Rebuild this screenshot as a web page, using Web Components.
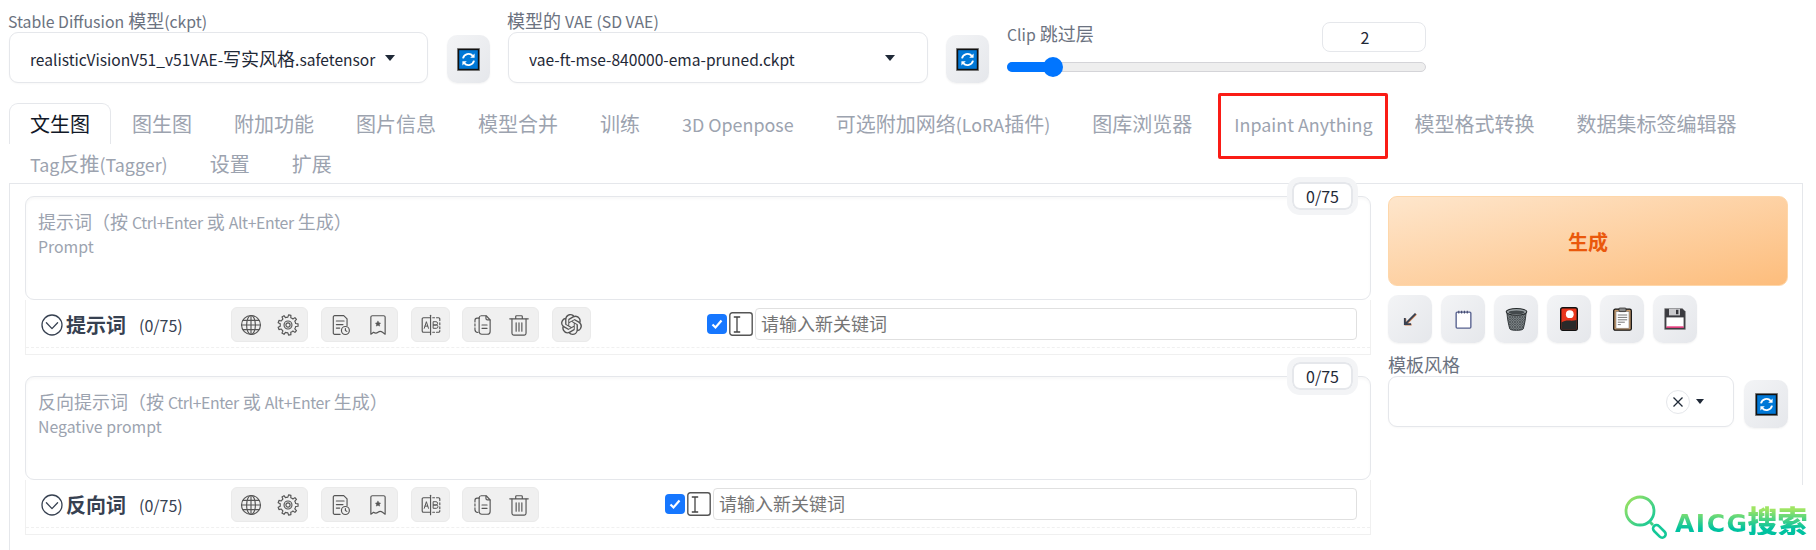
<!DOCTYPE html>
<html lang="zh">
<head>
<meta charset="utf-8">
<title>txt2img</title>
<style>
	html, body { margin: 0; background: #fff; }
	body { font-family: "Noto Sans CJK SC", "Noto Sans", sans-serif; color: #374151; }
</style>
</head>
<body>
<sd-app></sd-app>
<script>
const FONT = `"Noto Sans CJK SC", "Noto Sans", sans-serif`;
const LATIN = `.l { font-size: .88em; }`;
const lat = (text) => text.replace(/[\x21-\x7e]+(?: [\x21-\x7e]+)*/g, (m) => `<span class="l">${m}</span>`);

function gearPath(cx, cy, outer, inner, teeth) {
	let d = '';
	const step = (Math.PI * 2) / teeth;
	for (let i = 0; i < teeth; i++) {
		const a = i * step;
		const pts = [
			[inner, a - step * 0.5],
			[inner, a - step * 0.27],
			[outer, a - step * 0.17],
			[outer, a + step * 0.17],
			[inner, a + step * 0.27],
		];
		pts.forEach((p, j) => {
			const x = (cx + p[0] * Math.cos(p[1])).toFixed(2);
			const y = (cy + p[0] * Math.sin(p[1])).toFixed(2);
			d += (i === 0 && j === 0 ? 'M' : 'L') + x + ' ' + y;
		});
	}
	return d + 'Z';
}

const line = (inner) => `<svg viewBox="0 0 20 20" width="22" height="22" fill="none" stroke="#555" stroke-width="1.05" stroke-linecap="round" stroke-linejoin="round">${inner}</svg>`;

const ICONS = {
	globe: line(`<circle cx="10" cy="10" r="8.6"/><ellipse cx="10" cy="10" rx="4" ry="8.6"/><path d="M10 1.4v17.2M1.400 10h17.200M2.600 5.800h14.800M2.600 14.200h14.800"/>`),
	gear: line(`<path d="${gearPath(10, 10, 9.2, 7.1, 9)}"/><circle cx="10" cy="10" r="3.600"/><circle cx="10" cy="10" r="1.900"/>`),
	history: line(`<path d="M12.500 1.500H4.200A1.200 1.200 0 0 0 3 2.700v14.600a1.200 1.200 0 0 0 1.200 1.200h5M12.500 1.500l3 3v6"/><path d="M5.800 6.400h7M5.800 9.600h6M5.800 12.800h3"/><circle cx="14" cy="15" r="3.600"/><path d="M14 13.200V15l1.300.8"/>`),
	bookmark: line(`<path d="M3.500 3a1.400 1.400 0 0 1 1.400-1.400h10.200A1.400 1.400 0 0 1 16.500 3v15.400l-2.400-1.800a3.400 3.400 0 0 0-4.100 0 3.400 3.400 0 0 1-4 0L3.500 18.400z"/><path d="M10 6.600l.8 1.400 1.500.3-1 1.100.2 1.600-1.500-.7-1.500.7.200-1.600-1-1.100 1.500-.3z" fill="#555" stroke-width=".5"/>`),
	ab: line(`<path d="M9.600 1.200v17.600"/><path d="M9.600 3.400H3.200A1.200 1.200 0 0 0 2 4.600v10.800a1.200 1.200 0 0 0 1.200 1.200h6.400"/><path d="M11.600 3.400h1.600M15 3.400h1.800a1.200 1.200 0 0 1 1.200 1.200v1.400M18 8v1.800M18 11.600v1.800M18 15v.4a1.200 1.200 0 0 1-1.200 1.200H15M13.200 16.600h-1.600"/><path d="M3.900 13l1.900-6 1.900 6M4.600 11h2.400" stroke-width=".9"/><path d="M12.300 7h2.200a1.400 1.400 0 0 1 0 3h-2.200zM12.300 10h2.500a1.500 1.500 0 0 1 0 3h-2.500z" stroke-width=".9"/>`),
	copy: line(`<path d="M7.400 3.400A2 2 0 0 1 9.400 1.600h4.400l3.600 3.700v10.500a2.600 2.600 0 0 1-2.600 2.600H9.800a2.600 2.600 0 0 1-2.400-1.800"/><path d="M13.600 1.800v2.200a1.400 1.400 0 0 0 1.400 1.400h2.200"/><path d="M7.400 3.600v12.600"/><path d="M7.400 3.800H5.600A2 2 0 0 0 3.600 5.800v1.400M3.600 9v1.800M3.600 12.600v1.600a2.600 2.600 0 0 0 2.600 2.600"/><path d="M10 10h4.600M10 13h4.600"/>`),
	trash: line(`<path d="M1.600 4.400h16.800M7 4.200V2.400a.8.8 0 0 1 .8-.8h4.400a.8.8 0 0 1 .8.8v1.800"/><path d="M3.600 4.600v13a1.600 1.600 0 0 0 1.600 1.600h9.600a1.600 1.600 0 0 0 1.600-1.600v-13"/><path d="M7.400 8v7.600M10 8v7.600M12.600 8v7.600"/>`),
	openai: `<svg viewBox="0 0 24 24" width="21" height="21" fill="#555"><path d="M22.2819 9.8211a5.9847 5.9847 0 0 0-.5157-4.9108 6.0462 6.0462 0 0 0-6.5098-2.9A6.0651 6.0651 0 0 0 4.9807 4.1818a5.9847 5.9847 0 0 0-3.9977 2.9 6.0462 6.0462 0 0 0 .7427 7.0966 5.98 5.98 0 0 0 .511 4.9107 6.051 6.051 0 0 0 6.5146 2.9001A5.9847 5.9847 0 0 0 13.2599 24a6.0557 6.0557 0 0 0 5.7718-4.2058 5.9894 5.9894 0 0 0 3.9977-2.9001 6.0557 6.0557 0 0 0-.7475-7.0729zm-9.022 12.6081a4.4755 4.4755 0 0 1-2.8764-1.0408l.1419-.0804 4.7783-2.7582a.7948.7948 0 0 0 .3927-.6813v-6.7369l2.02 1.1686a.071.071 0 0 1 .038.052v5.5826a4.504 4.504 0 0 1-4.4945 4.4944zm-9.6607-4.1254a4.4708 4.4708 0 0 1-.5346-3.0137l.142.0852 4.783 2.7582a.7712.7712 0 0 0 .7806 0l5.8428-3.3685v2.3324a.0804.0804 0 0 1-.0332.0615L9.74 19.9502a4.4992 4.4992 0 0 1-6.1408-1.6464zM2.3408 7.8956a4.485 4.485 0 0 1 2.3655-1.9728V11.6a.7664.7664 0 0 0 .3879.6765l5.8144 3.3543-2.0201 1.1685a.0757.0757 0 0 1-.071 0l-4.8303-2.7865A4.504 4.504 0 0 1 2.3408 7.872zm16.5963 3.8558L13.1038 8.364 15.1192 7.2a.0757.0757 0 0 1 .071 0l4.8303 2.7913a4.4944 4.4944 0 0 1-.6765 8.1042v-5.6772a.79.79 0 0 0-.407-.667zm2.0107-3.0231l-.142-.0852-4.7735-2.7818a.7759.7759 0 0 0-.7854 0L9.409 9.2297V6.8974a.0662.0662 0 0 1 .0284-.0615l4.8303-2.7866a4.4992 4.4992 0 0 1 6.6802 4.66zM8.3065 12.863l-2.02-1.1638a.0804.0804 0 0 1-.038-.0567V6.0742a4.4992 4.4992 0 0 1 7.3757-3.4537l-.142.0805L8.704 5.459a.7948.7948 0 0 0-.3927.6813zm1.0976-2.3654l2.602-1.4998 2.6069 1.4998v2.9994l-2.5974 1.4997-2.6067-1.4997Z"/></svg>`,
	refresh: `<svg viewBox="0 0 23 23" width="23" height="23"><rect x=".5" y=".5" width="22" height="22" fill="#0078d7" stroke="#8d8d8d"/><rect x="1.500" y="1.500" width="20" height="20" fill="none" stroke="#111" stroke-width="1.400"/><g fill="none" stroke="#fff" stroke-width="1.900"><path d="M6 10.400a5.700 5.700 0 0 1 9.800-2.600"/><path d="M17 12.600a5.700 5.700 0 0 1-9.800 2.600"/></g><path d="M17.600 5.400v4.400h-4.400zM5.400 17.600v-4.400h4.400z" fill="#fff"/></svg>`,
	arrow: `<svg viewBox="0 0 20 20" width="20" height="20" fill="none"><path d="M15.600 4.600L5.600 14.600M4.800 9v6.200H11" stroke="#c97a4a" stroke-width="1.800" transform="translate(.6 .5)"/><path d="M15.600 4.600L5.600 14.600M4.800 9v6.200H11" stroke="#374151" stroke-width="1.800"/></svg>`,
	note: `<svg viewBox="0 0 20 20" width="21" height="21" fill="none"><rect x="3" y="3" width="14" height="15.200" rx="1" fill="#fff" stroke="#57618f" stroke-width="1.300"/><path d="M5.500 1.600v2.600M8.200 1.600v2.600M10.900 1.600v2.600M13.600 1.600v2.600" stroke="#41476b" stroke-width="1"/></svg>`,
	bin: `<svg viewBox="0 0 24 26" width="23" height="25"><defs><pattern id="m" width="2.600" height="2.600" patternUnits="userSpaceOnUse"><rect width="2.600" height="2.600" fill="#8b9295"/><path d="M0 0l2.600 2.600M2.600 0L0 2.600" stroke="#2f3437" stroke-width=".6"/></pattern></defs><path d="M2 5.400c.4 6 1.600 13 3 17.400.8 2 13.200 2 14 0 1.400-4.400 2.600-11.400 3-17.400z" fill="url(#m)" stroke="#2f3437" stroke-width="1"/><ellipse cx="12" cy="5" rx="10.800" ry="3.500" fill="#9aa1a4" stroke="#25292b" stroke-width="1.100"/><ellipse cx="12" cy="5.500" rx="8.200" ry="2" fill="#43494c"/></svg>`,
	card: `<svg viewBox="0 0 18 24" width="18" height="24"><rect x=".7" y=".7" width="16.600" height="22.600" rx="2" fill="#e9361c" stroke="#111" stroke-width="1.400"/><path d="M1.400 18V15.400c3-1.400 5-2 7.600-1.800 3 .2 5.400 0 7.600-.6V22a.8.8 0 0 1-.8.8H2.200a.8.8 0 0 1-.8-.8z" fill="#2a2a2a"/><circle cx="9.800" cy="7.200" r="3.900" fill="#fff"/></svg>`,
	clip: `<svg viewBox="0 0 19 24" width="19" height="24"><rect x=".7" y="2.200" width="17.600" height="21" rx="1.500" fill="#c79b6d" stroke="#111" stroke-width="1.300"/><rect x="3" y="4.600" width="13" height="16.600" fill="#fff" stroke="#6b6b6b" stroke-width=".5"/><rect x="6" y="1" width="7" height="3.600" rx=".8" fill="#8b8b8b" stroke="#222" stroke-width=".7"/><path d="M4.800 8h9.400M4.800 10.400h9.400M4.800 12.800h9.400M4.800 15.200h7M4.800 17.600h3" stroke="#777" stroke-width="1"/></svg>`,
	floppy: `<svg viewBox="0 0 22 22" width="22" height="22"><path d="M.6.600h17.800l3 3v17.800H.6z" fill="#3b3b40" stroke="#8a8a8a" stroke-width=".5"/><rect x="5" y=".8" width="11" height="6.600" fill="#c9c9cc"/><rect x="12" y="1.800" width="2.400" height="4.400" fill="#35353a"/><rect x="2.400" y="9.400" width="17.200" height="10.200" fill="#fff"/><rect x="2.400" y="18.400" width="17.200" height="1.400" fill="#e6246f"/></svg>`,
	collapse: `<svg viewBox="0 0 22 22" width="22" height="22" fill="none" stroke="#374151" stroke-width="1.300" stroke-linecap="round" stroke-linejoin="round"><circle cx="11" cy="11" r="10"/><path d="M5.400 8.800L11 14.600l5.600-5.800"/></svg>`,
	ibeam: `<svg viewBox="0 0 24 24" width="24" height="24" fill="none"><rect x=".8" y=".8" width="22.400" height="22.400" rx="2.500" stroke="#555" stroke-width="1.400"/><path d="M4.800 5h6.400M4.800 20h6.400M8 5v15" stroke="#444" stroke-width="1.300"/></svg>`,
};

class SdSelect extends HTMLElement {
	constructor() {
		super().attachShadow({ mode: 'open' });
		this.shadowRoot.innerHTML = `
			<style>
				:host { display: block; font-family: ${FONT}; }
				${LATIN}
				.label { font-size: 18px; line-height: 24px; height: 24px; color: #6b7280; margin: 8px 0 0 -1px; white-space: nowrap; }
				.box { display: flex; align-items: center; height: 51px; box-sizing: border-box; border: 1px solid #e5e7eb; border-radius: 9px; background: #fff; padding: 0 20px; box-shadow: 0 1px 2px rgba(0,0,0,.03); }
				.value { flex: 1; min-width: 0; font-size: 18px; color: #1f2937; white-space: nowrap; overflow: hidden; }
				.value .l { font-size: .865em; }
				.caret { width: 0; height: 0; border: 5px solid transparent; border-top: 6px solid #1f2937; border-bottom: 0; margin-left: 4px; margin-right: 12px; }
			</style>
			<div class="label">${lat(this.getAttribute('label'))}</div>
			<div class="box"><div class="value">${lat(this.getAttribute('value'))}</div><div class="caret"></div></div>`;
	}
}

class SdIconButton extends HTMLElement {
	constructor() {
		super().attachShadow({ mode: 'open' });
		this.shadowRoot.innerHTML = `
			<style>
				:host { display: flex; align-items: center; justify-content: center; box-sizing: border-box; flex: none; width: 44px; height: 48px; border-radius: 10px; background: linear-gradient(to bottom right, #f3f4f6, #e5e7eb); box-shadow: 0 1px 2px rgba(0,0,0,.05); }
			</style>
			<span id="i" style="display:flex"></span>`;
	}

	connectedCallback() {
		this.shadowRoot.getElementById('i').innerHTML = ICONS[this.getAttribute('icon')];
	}
}

class SdClip extends HTMLElement {
	constructor() {
		super().attachShadow({ mode: 'open' });
		this.shadowRoot.innerHTML = `
			<style>
				:host { display: block; width: 419px; font-family: ${FONT}; }
				${LATIN}
				.head { display: flex; justify-content: space-between; height: 30px; margin-top: 22px; }
				.label { font-size: 18px; line-height: 24px; color: #6b7280; }
				.num { width: 104px; height: 30px; box-sizing: border-box; border: 1px solid #e5e7eb; border-radius: 8px; padding-right: 18px; text-align: center; font-size: 16px; line-height: 28px; color: #1f2937; }
				.track { position: relative; height: 10px; margin-top: 10px; box-sizing: border-box; border: 1px solid #d4d4d8; border-radius: 5px; background: #eee; }
				.fill { position: absolute; left: -1px; top: -1px; width: 46px; height: 10px; border-radius: 5px 0 0 5px; background: #0075ff; }
				.thumb { position: absolute; left: 35px; top: -6px; width: 20px; height: 20px; border-radius: 50%; background: #0075ff; }
			</style>
			<div class="head"><div class="label" style="margin-top:-1px">${lat('Clip 跳过层')}</div><div class="num">2</div></div>
			<div class="track"><div class="fill"></div><div class="thumb"></div></div>`;
	}
}

class SdTabs extends HTMLElement {
	constructor() {
		super().attachShadow({ mode: 'open' });
		const names = ['文生图', '图生图', '附加功能', '图片信息', '模型合并', '训练', '3D Openpose', '可选附加网络(LoRA插件)', '图库浏览器', 'Inpaint Anything', '模型格式转换', '数据集标签编辑器', 'Tag反推(Tagger)', '设置', '扩展'];
		const tabs = names.map((n, i) => {
			let cls = 'tab';
			if (i === 0) cls += ' active';
			if (n === 'Inpaint Anything') cls += ' marked';
			if (i >= 12) cls += ' second';
			return `<div class="${cls}">${lat(n)}</div>`;
		}).join('');
		this.shadowRoot.innerHTML = `
			<style>
				:host { display: block; font-family: ${FONT}; }
				.l { font-size: .895em; }
				.bar { display: flex; flex-wrap: wrap; padding-left: 9px; margin-top: 20px; }
				.tab { position: relative; box-sizing: border-box; height: 41px; padding: 0 20px; border: 1px solid transparent; border-bottom: 0; font-size: 20px; line-height: 39px; color: #9ca3af; white-space: nowrap; }
				.tab.second { height: 39px; line-height: 38px; }
				.active { border-color: #e5e7eb; border-radius: 9px 9px 0 0; color: #111827; }
				.marked::after { content: ''; position: absolute; left: 4px; right: 5px; top: -11px; bottom: -15px; border: 3px solid #fa1c16; border-radius: 2px; }
			</style>
			<div class="bar">${tabs}</div>`;
	}
}

class SdPrompt extends HTMLElement {
	constructor() {
		super().attachShadow({ mode: 'open' });
	}

	connectedCallback() {
		const btn = (n) => `<span class="ic">${ICONS[n]}</span>`;
		const gpt = this.hasAttribute('gpt') ? `<div class="group one">${btn('openai')}</div>` : '';
		this.shadowRoot.innerHTML = `
			<style>
				:host { display: block; font-family: ${FONT}; }
				${LATIN}
				.area { position: relative; height: 104px; box-sizing: border-box; border: 1px solid #e5e7eb; border-radius: 9px; padding: 12px 12px; font-size: 18px; line-height: 25px; color: #9ca3af; box-shadow: inset 0 2px 3px rgba(0,0,0,.03); }
				.hint .l { letter-spacing: -.4px; }
				.sub { margin-top: -2px; }
				.count { position: absolute; right: 17px; top: -15px; width: 61px; height: 28px; box-sizing: border-box; background: #fff; border: 2px solid #e5e7eb; border-radius: 8px; outline: 5px solid #f3f4f6; text-align: center; font-size: 16px; line-height: 25px; color: #1f2937; }
				.bar { display: flex; align-items: flex-start; height: 55px; box-sizing: border-box; padding-top: 7px; border: 1px solid #f0f0f0; border-top: 0; position: relative; }
				.bar::after { content: ''; position: absolute; left: 0; right: 0; bottom: 6px; border-top: 1px dashed #f0f0f0; }
				.head { display: flex; align-items: center; width: 205px; height: 35px; padding-left: 15px; box-sizing: border-box; flex: none; }
				.title { font-size: 20px; font-weight: 700; margin-left: 3px; color: #374151; line-height: 35px; }
				.num { font-size: 16px; margin-left: 13px; color: #374151; }
				.group { display: flex; align-items: center; justify-content: space-between; width: 77px; height: 35px; box-sizing: border-box; padding: 0 8px; background: #f0f0f0; border: 1px solid #eaeaea; border-radius: 6px; margin-right: 13px; flex: none; }
				.group.tight { margin-right: 12px; }
				.group.one { width: 39px; justify-content: center; padding: 0; }
				.ic { display: flex; }
				.kw { display: flex; align-items: flex-start; flex: 1; min-width: 0; margin-left: var(--kw-gap); margin-right: 13px; }
				.check { width: 20px; height: 20px; border-radius: 4px; background: #1677ff; margin-top: 7px; flex: none; display: flex; align-items: center; justify-content: center; }
				.beam { margin: 5px 0 0 2px; flex: none; display: flex; }
				.input { flex: 1; min-width: 0; height: 32px; margin: 1px 0 0 2px; box-sizing: border-box; border: 1px solid #e0e0e0; border-radius: 4px; padding-left: 5px; font-size: 18px; line-height: 29px; color: #757575; }
			</style>
			<div class="area">
				<div class="count">0/75</div>
				<div class="hint">${lat(this.getAttribute('hint'))}</div>
				<div class="sub">${lat(this.getAttribute('sub'))}</div>
			</div>
			<div class="bar">
				<div class="head"><span class="ic">${ICONS.collapse}</span><span class="title">${this.getAttribute('label')}</span><span class="num">(0/75)</span></div>
				<div class="group">${btn('globe')}${btn('gear')}</div>
				<div class="group">${btn('history')}${btn('bookmark')}</div>
				<div class="group one tight">${btn('ab')}</div>
				<div class="group">${btn('copy')}${btn('trash')}</div>
				${gpt}
				<div class="kw" style="--kw-gap:${this.getAttribute('kw-gap')}px">
					<div class="check"><svg viewBox="0 0 14 14" width="14" height="14" fill="none"><path d="M2.500 7.500l3 3 6-7" stroke="#fff" stroke-width="2.200"/></svg></div>
					<div class="beam">${ICONS.ibeam}</div>
					<div class="input">请输入新关键词</div>
				</div>
			</div>`;
	}
}

class SdSide extends HTMLElement {
	constructor() {
		super().attachShadow({ mode: 'open' });
		this.shadowRoot.innerHTML = `
			<style>
				:host { display: block; width: 400px; flex: none; font-family: ${FONT}; }
				.gen { height: 90px; box-sizing: border-box; border: 1px solid #fed7aa; border-radius: 9px; background: linear-gradient(to bottom right, #fee6cc, #fdbd7c); display: flex; align-items: center; justify-content: center; font-size: 20px; font-weight: 700; color: #ea580c; }
				.tools { display: flex; gap: 9px; margin-top: 9px; }
				.label { font-size: 18px; line-height: 24px; color: #6b7280; margin-top: 9px; }
				.row { display: flex; gap: 10px; align-items: flex-start; }
				.row sd-icon-button { margin-top: 4px; }
				.box { display: flex; align-items: center; width: 346px; height: 51px; box-sizing: border-box; border: 1px solid #e5e7eb; border-radius: 9px; background: #fff; padding-left: 277px; box-shadow: 0 1px 2px rgba(0,0,0,.03); }
				.clear { width: 24px; height: 24px; box-sizing: border-box; border: 1px solid #e5e7eb; border-radius: 50%; display: flex; align-items: center; justify-content: center; }
				.caret { width: 0; height: 0; border: 4px solid transparent; border-top: 5px solid #1f2937; border-bottom: 0; margin-left: 6px; }
			</style>
			<div class="gen">生成</div>
			<div class="tools">
				<sd-icon-button icon="arrow"></sd-icon-button>
				<sd-icon-button icon="note"></sd-icon-button>
				<sd-icon-button icon="bin"></sd-icon-button>
				<sd-icon-button icon="card"></sd-icon-button>
				<sd-icon-button icon="clip"></sd-icon-button>
				<sd-icon-button icon="floppy"></sd-icon-button>
			</div>
			<div class="label">模板风格</div>
			<div class="row">
				<div class="box">
					<div class="clear"><svg viewBox="0 0 12 12" width="12" height="12"><path d="M1.500 1.500l9 9M10.500 1.500l-9 9" stroke="#1f2937" stroke-width="1.300"/></svg></div>
					<div class="caret"></div>
				</div>
				<sd-icon-button icon="refresh"></sd-icon-button>
			</div>`;
	}
}

class SdWatermark extends HTMLElement {
	constructor() {
		super().attachShadow({ mode: 'open' });
		this.shadowRoot.innerHTML = `
			<style>
				:host { position: absolute; right: 0; bottom: 0; width: 196px; height: 65px; background: #fff; display: flex; font-family: "DejaVu Sans", ${FONT}; }
				svg { position: absolute; left: 4px; top: 10px; }
				.t { position: absolute; left: 55px; top: 18px; height: 32px; line-height: 32px; font-size: 25px; font-weight: 700; white-space: nowrap; letter-spacing: 1.500px; background: linear-gradient(to bottom, #9fe563 20%, #00c2a0 80%); -webkit-background-clip: text; background-clip: text; color: transparent; }
				.t span { font-family: ${FONT}; font-size: 30px; font-weight: 900; letter-spacing: 0; margin-left: -1px; }
			</style>
			<svg width="48" height="50" viewBox="0 0 48 50" fill="none">
				<defs><linearGradient id="g" x1="0" y1="0" x2="1" y2="1"><stop offset="0" stop-color="#a3e35d"/><stop offset="1" stop-color="#0cc79c"/></linearGradient></defs>
				<circle cx="16" cy="16" r="14" stroke="url(#g)" stroke-width="2.800"/>
				<path d="M26 27l3 3" stroke="#43cf84" stroke-width="2.800"/>
				<rect x="-3.500" y="-7" width="7" height="15" rx="3.500" transform="translate(35 36) rotate(-45)" stroke="#14c898" stroke-width="2.600"/>
			</svg>
			<div class="t">AICG<span>搜索</span></div>`;
	}
}

class SdApp extends HTMLElement {
	constructor() {
		super().attachShadow({ mode: 'open' });
		this.shadowRoot.innerHTML = `
			<style>
				:host { display: block; position: relative; width: 1816px; height: 550px; overflow: hidden; background: #fff; }
				.top { display: flex; align-items: flex-start; padding-left: 9px; height: 83px; }
				.first { width: 419px; flex: none; }
				.second { width: 420px; flex: none; }
				sd-icon-button { margin: 35px 18px 0 19px; width: 43px; }
				sd-icon-button.b { margin-left: 18px; }
				.panel { display: flex; gap: 17px; align-items: flex-start; box-sizing: border-box; margin: 0 13px 0 9px; height: 400px; padding: 12px 14px 12px 15px; border: 1px solid #e5e7eb; }
				.main { flex: 1; min-width: 0; display: flex; flex-direction: column; gap: 21px; }
			</style>
			<div class="top">
				<sd-select class="first" label="Stable Diffusion 模型(ckpt)" value="realisticVisionV51_v51VAE-写实风格.safetensor"></sd-select>
				<sd-icon-button icon="refresh"></sd-icon-button>
				<sd-select class="second" label="模型的 VAE (SD VAE)" value="vae-ft-mse-840000-ema-pruned.ckpt"></sd-select>
				<sd-icon-button class="b" icon="refresh"></sd-icon-button>
				<sd-clip></sd-clip>
			</div>
			<sd-tabs></sd-tabs>
			<div class="panel">
				<div class="main">
					<sd-prompt label="提示词" hint="提示词（按 Ctrl+Enter 或 Alt+Enter 生成）" sub="Prompt" kw-gap="103" gpt></sd-prompt>
					<sd-prompt label="反向词" hint="反向提示词（按 Ctrl+Enter 或 Alt+Enter 生成）" sub="Negative prompt" kw-gap="113"></sd-prompt>
				</div>
				<sd-side></sd-side>
			</div>
			<sd-watermark></sd-watermark>`;
	}
}

customElements.define('sd-icon-button', SdIconButton);
customElements.define('sd-select', SdSelect);
customElements.define('sd-clip', SdClip);
customElements.define('sd-tabs', SdTabs);
customElements.define('sd-prompt', SdPrompt);
customElements.define('sd-side', SdSide);
customElements.define('sd-watermark', SdWatermark);
customElements.define('sd-app', SdApp);
</script>
</body>
</html>
